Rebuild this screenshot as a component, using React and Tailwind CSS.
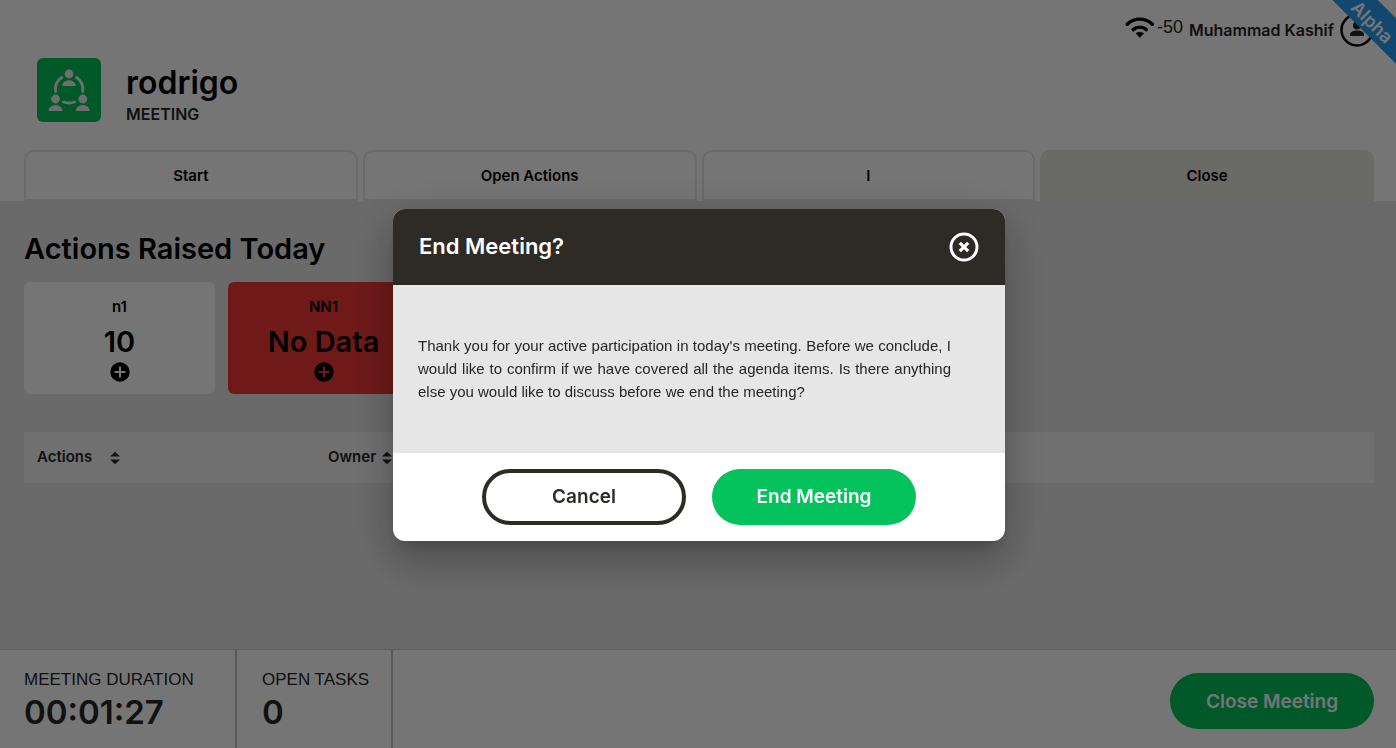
import { useState } from "react";

const TABS = ["Start", "Open Actions", "I", "Close"];

const METRICS = [
  { name: "n1", value: "10", missing: false },
  { name: "NN1", value: "No Data", missing: true },
];

function MeetingLogo() {
  return (
    <svg className="size-16 shrink-0 rounded-md bg-[#04c35c]" viewBox="0 0 64 64" fill="#f0f0f0">
      <circle cx="32" cy="16" r="4.4" />
      <path d="M25.200 28a6.800 5.800 0 0 1 13.600 0z" />
      <circle cx="18.500" cy="41" r="4.400" />
      <path d="M11.500 53a7 6 0 0 1 14 0z" />
      <circle cx="45.800" cy="41" r="4.400" />
      <path d="M38.800 53a7 6 0 0 1 14 0z" />
      <g fill="none" stroke="#f0f0f0" strokeWidth="2.800" strokeLinecap="round">
        <path d="M24.800 19.500C20 22.500 18 27.500 18.500 33.500" />
        <path d="M39.500 19.500C44.300 22.500 46.300 27.500 45.800 33.500" />
        <path d="M26.500 44q5.500 2 11 0" />
      </g>
    </svg>
  );
}

function WifiIcon() {
  return (
    <svg className="h-[22px] w-[30px]" viewBox="0 0 30 22" fill="none" stroke="#000">
      <path d="M2.300 8.200A18 18 0 0 1 27.300 8.200" strokeWidth="3.400" strokeLinecap="round" />
      <path d="M8.200 13.600A10 10 0 0 1 21.400 13.600" strokeWidth="3.400" strokeLinecap="round" />
      <path d="M11 17.200Q14.800 15.200 18.600 17.200L14.800 21.400z" fill="#000" strokeWidth="0.600" />
    </svg>
  );
}

function UserIcon() {
  return (
    <svg className="size-[34px]" viewBox="0 0 34 34" fill="none">
      <circle cx="17" cy="17" r="15.500" stroke="#000" strokeWidth="2.500" />
      <circle cx="17" cy="12.500" r="4" fill="#262626" />
      <path d="M10 23v-1.500c0-2.500 3.500-4 7-4s7 1.500 7 4V23z" fill="#262626" />
    </svg>
  );
}

function CloseIcon() {
  return (
    <svg className="size-[30px]" viewBox="0 0 30 30" fill="none" stroke="#fff">
      <circle cx="15" cy="15" r="13" strokeWidth="3" />
      <path d="M10.800 10.800l8.400 8.400M19.200 10.800l-8.400 8.400" strokeWidth="3.200" />
    </svg>
  );
}

// The plus takes the colour of the card below it
function PlusIcon({ className }) {
  return (
    <svg className="size-5" viewBox="0 0 20 20">
      <circle cx="10" cy="10" r="9.700" />
      <path className={className} d="M10 4.500v11M4.500 10h11" strokeWidth="2" />
    </svg>
  );
}

function SortIcon() {
  return (
    <svg className="h-3.5 w-2.5" viewBox="0 0 10 14" fill="#262626">
      <path d="M5 0.800L10 5.500H0z" />
      <path d="M5 13.200L10 8.500H0z" />
    </svg>
  );
}

function EndMeetingDialog({ onClose }) {
  return (
    <div className="fixed inset-0 z-50 flex items-center justify-center bg-black/54 pt-px pl-0.5">
      <div
        role="dialog"
        aria-modal="true"
        aria-labelledby="dialog-title"
        className="w-full max-w-[612px] overflow-hidden rounded-xl bg-white shadow-[0_11px_15px_-7px_rgba(0,0,0,0.2),0_24px_38px_3px_rgba(0,0,0,0.14),0_9px_46px_8px_rgba(0,0,0,0.12)]"
      >
        <div className="flex h-19 items-center justify-between bg-[#2e2a25] px-[26px]">
          <h2 id="dialog-title" className="text-[22px] font-semibold text-white">
            End Meeting?
          </h2>
          <button aria-label="Close" onClick={onClose}>
            <CloseIcon />
          </button>
        </div>
        <div className="bg-[#e6e6e6] pt-[49px] pr-[54px] pb-[50px] pl-[25px]">
          <p className="text-justify font-['Liberation_Sans',sans-serif] text-[15px] leading-[23px] text-[#262626]">
            Thank you for your active participation in today's meeting. Before we conclude, I would
            like to confirm if we have covered all the agenda items. Is there anything else you
            would like to discuss before we end the meeting?
          </p>
        </div>
        <div className="flex justify-center gap-[26px] py-4">
          <button
            onClick={onClose}
            className="h-14 w-51 rounded-full border-4 border-[#2e2a25] pt-0.5 text-[19px] font-semibold text-[#2e2a25]"
          >
            Cancel
          </button>
          <button
            onClick={onClose}
            className="h-14 w-51 rounded-full bg-[#04c35c] pt-0.5 text-[19px] font-semibold text-white"
          >
            End Meeting
          </button>
        </div>
      </div>
    </div>
  );
}

export default function App() {
  const [dialogOpen, setDialogOpen] = useState(true);
  const [tab, setTab] = useState("Close");

  return (
    <div className="relative flex min-h-screen flex-col overflow-hidden bg-white font-['Inter',sans-serif] text-black">
      {/* Header */}
      <header className="pr-[22px] pl-6">
        <div className="flex h-[58px] items-center justify-end pt-0.5">
          <div className="mr-1.5 flex items-center gap-0.5 pb-1.5">
            <WifiIcon />
            <span className="font-['Liberation_Sans',sans-serif] text-lg text-[#262626]">-50</span>
          </div>
          <span className="mr-1.5 text-base font-semibold text-[#262626]">Muhammad Kashif</span>
          <UserIcon />
        </div>
        <div className="flex items-start gap-[25px] pl-[13px]">
          <MeetingLogo />
          <div className="pt-[5px]">
            <h1 className="text-[32px] leading-10 font-semibold">rodrigo</h1>
            <p className="text-base leading-[22px] font-semibold text-[#262626]">MEETING</p>
          </div>
        </div>
        <nav className="mt-[25px] flex gap-[5px]">
          {TABS.map((name) => (
            <button
              key={name}
              onClick={() => setTab(name)}
              className={
                "h-[51px] flex-1 rounded-t-[10px] border-2 pt-0.5 text-[15px] font-semibold " +
                (tab === name ? "border-[#e7e6e0] bg-[#e7e6e0]" : "border-[#e6e6e6] bg-white")
              }
            >
              {name}
            </button>
          ))}
        </nav>
      </header>

      {/* Alpha ribbon */}
      <div className="absolute top-[5px] -right-[55px] z-10 flex h-8 w-[150px] rotate-45 items-center justify-center bg-[#299cf4] pt-2 pr-1 text-lg font-semibold text-white">
        Alpha
      </div>

      {/* Content */}
      <main className="flex-1 bg-[#e6e6e6] pt-7 pr-[22px] pl-6">
        <h2 className="text-[29px] leading-10 font-semibold">Actions Raised Today</h2>
        <div className="mt-[13px] flex gap-[13px]">
          {METRICS.map((m) => (
            <div
              key={m.name}
              className={
                "flex h-28 w-[191px] flex-col items-center rounded-md pt-[15px] " +
                (m.missing ? "bg-[#f13838]" : "bg-white")
              }
            >
              <span className="text-[15px] leading-5 font-semibold">{m.name}</span>
              <span className="mt-[5px] text-[29px] leading-10 font-semibold">{m.value}</span>
              <button aria-label={"Add action for " + m.name}>
                <PlusIcon className={m.missing ? "stroke-[#f13838]" : "stroke-white"} />
              </button>
            </div>
          ))}
        </div>

        <table className="mt-[38px] w-full bg-[#f5f5f5] text-left text-[15px] text-[#262626]">
          <thead>
            <tr className="h-[51px]">
              <th className="w-[291px] pl-[13px] font-semibold">
                <span className="flex items-center gap-[18px]">
                  Actions <SortIcon />
                </span>
              </th>
              <th className="pl-[13px] font-semibold">
                <span className="flex items-center gap-1.5">
                  Owner <SortIcon />
                </span>
              </th>
            </tr>
          </thead>
        </table>
      </main>

      {/* Footer */}
      <footer className="flex h-[99px] shrink-0 border-t border-[#cccccc] pr-[22px]">
        <div className="w-[237px] border-r-2 border-[#bfbfbf] pt-5 pl-6">
          <p className="font-['Liberation_Sans',sans-serif] text-[17px] leading-5 text-[#262626]">
            MEETING DURATION
          </p>
          <p className="text-[33px] leading-11 font-semibold text-[#262626]">00:01:27</p>
        </div>
        <div className="w-[156px] border-r-2 border-[#bfbfbf] pt-5 pl-[25px]">
          <p className="font-['Liberation_Sans',sans-serif] text-[17px] leading-5 text-[#262626]">
            OPEN TASKS
          </p>
          <p className="text-[33px] leading-11 font-semibold text-[#262626]">0</p>
        </div>
        <div className="flex flex-1 items-center justify-end pt-1">
          <button
            onClick={() => setDialogOpen(true)}
            className="h-14 w-51 rounded-full bg-[#04c35c] pt-0.5 text-[19px] font-semibold text-white"
          >
            Close Meeting
          </button>
        </div>
      </footer>

      {dialogOpen && <EndMeetingDialog onClose={() => setDialogOpen(false)} />}
    </div>
  );
}
